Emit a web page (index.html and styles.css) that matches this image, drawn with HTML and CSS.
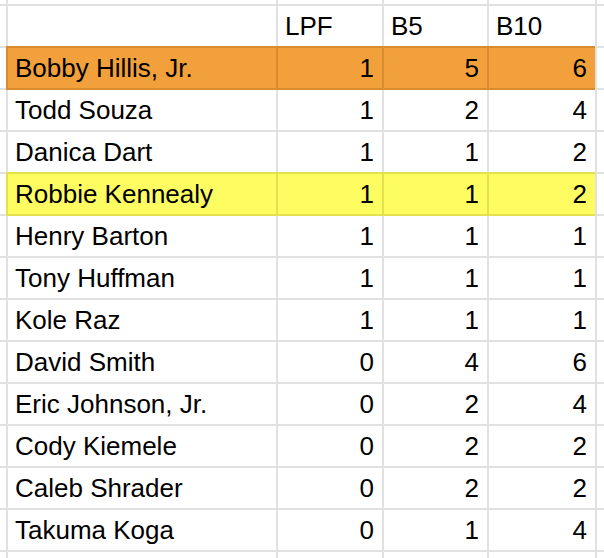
FILE: index.html
```html
<!DOCTYPE html>
<html lang="en">
<head>
<meta charset="utf-8">
<title>Sheet</title>
<link rel="stylesheet" href="styles.css">
</head>
<body>
<div class="sheet">
  <div class="row"><div class="c"></div><div class="c"></div><div class="c"></div><div class="c"></div><div class="c"></div><div class="c"></div></div>
  <div class="row head"><div class="c"></div><div class="c"></div><div class="c t">LPF</div><div class="c t">B5</div><div class="c t">B10</div><div class="c"></div></div>
  <div class="row hl orange"><div class="c"></div><div class="c t">Bobby Hillis, Jr.</div><div class="c n">1</div><div class="c n">5</div><div class="c n last">6</div><div class="c"></div></div>
  <div class="row"><div class="c"></div><div class="c t">Todd Souza</div><div class="c n">1</div><div class="c n">2</div><div class="c n">4</div><div class="c"></div></div>
  <div class="row"><div class="c"></div><div class="c t">Danica Dart</div><div class="c n">1</div><div class="c n">1</div><div class="c n">2</div><div class="c"></div></div>
  <div class="row hl yellow"><div class="c"></div><div class="c t">Robbie Kennealy</div><div class="c n">1</div><div class="c n">1</div><div class="c n last">2</div><div class="c"></div></div>
  <div class="row"><div class="c"></div><div class="c t">Henry Barton</div><div class="c n">1</div><div class="c n">1</div><div class="c n">1</div><div class="c"></div></div>
  <div class="row"><div class="c"></div><div class="c t">Tony Huffman</div><div class="c n">1</div><div class="c n">1</div><div class="c n">1</div><div class="c"></div></div>
  <div class="row"><div class="c"></div><div class="c t">Kole Raz</div><div class="c n">1</div><div class="c n">1</div><div class="c n">1</div><div class="c"></div></div>
  <div class="row"><div class="c"></div><div class="c t">David Smith</div><div class="c n">0</div><div class="c n">4</div><div class="c n">6</div><div class="c"></div></div>
  <div class="row"><div class="c"></div><div class="c t">Eric Johnson, Jr.</div><div class="c n">0</div><div class="c n">2</div><div class="c n">4</div><div class="c"></div></div>
  <div class="row"><div class="c"></div><div class="c t">Cody Kiemele</div><div class="c n">0</div><div class="c n">2</div><div class="c n">2</div><div class="c"></div></div>
  <div class="row"><div class="c"></div><div class="c t">Caleb Shrader</div><div class="c n">0</div><div class="c n">2</div><div class="c n">2</div><div class="c"></div></div>
  <div class="row"><div class="c"></div><div class="c t">Takuma Koga</div><div class="c n">0</div><div class="c n">1</div><div class="c n">4</div><div class="c"></div></div>
  <div class="row"><div class="c"></div><div class="c"></div><div class="c"></div><div class="c"></div><div class="c"></div><div class="c"></div></div>
</div>
</body>
</html>
```
FILE: styles.css
```css
html, body {
  margin: 0;
  padding: 0;
  background: #fff;
}
.sheet {
  width: 604px;
  height: 558px;
  overflow: hidden;
  display: grid;
  grid-template-rows: 4px repeat(13, 40px) 1fr;
  row-gap: 2px;
  background: #e1e1e1;
  font-family: "Liberation Sans", Arial, sans-serif;
  font-size: 26px;
  color: #000;
}
.row {
  display: grid;
  grid-template-columns: 6px 268px 104px 103px 106px 1fr;
  column-gap: 2px;
}
.c {
  background: #fff;
  line-height: 40px;
  white-space: nowrap;
  overflow: visible;
}
.t {
  padding-left: 7px;
}
.n {
  text-align: right;
  padding-right: 8px;
}
.orange { --fill: #f2a03b; --edge: #d98b2f; }
.yellow { --fill: #fdfd62; --edge: #e2e24f; }
.hl .t, .hl .n {
  background: var(--fill);
  box-shadow: 0 0 0 2px var(--edge);
}
.hl .n.last {
  box-shadow: 0 -2px 0 var(--edge), 0 2px 0 var(--edge);
}
```
